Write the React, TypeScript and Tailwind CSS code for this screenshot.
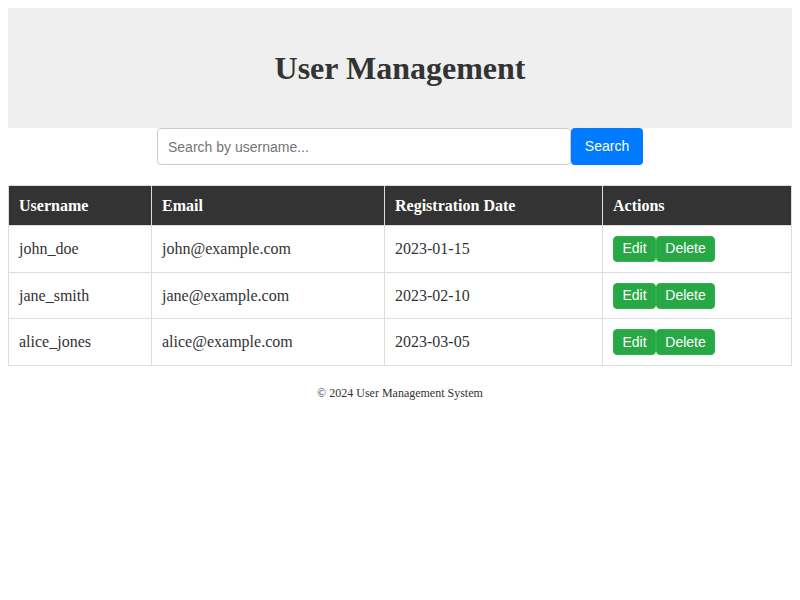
import React from "react";

const users = [
  { u: "john_doe", e: "john@example.com", d: "2023-01-15" },
  { u: "jane_smith", e: "jane@example.com", d: "2023-02-10" },
  { u: "alice_jones", e: "alice@example.com", d: "2023-03-05" },
];

export default function App() {
  return (
    <div className="p-2 bg-white min-h-[600px] text-[#333]" style={{ fontFamily: '"Liberation Serif", "Times New Roman", serif' }}>
      <header className="bg-[#efefef] h-[120px] flex items-center justify-center">
        <h1 className="text-[32px] font-bold text-[#333] leading-[37px]">User Management</h1>
      </header>
      <div className="flex justify-center">
        <input
          className="w-[414px] h-[37px] border border-[#ccc] rounded-[4px] px-[10px] text-[14px] text-[#333] placeholder:text-[#757575] outline-none"
          style={{ fontFamily: '"Liberation Sans", Arial, sans-serif' }}
          placeholder="Search by username..."
        />
        <button
          className="w-[72px] h-[37px] bg-[#007bff] text-white text-[14px] rounded-[4px]"
          style={{ fontFamily: '"Liberation Sans", Arial, sans-serif' }}
        >
          Search
        </button>
      </div>
      <table className="w-full mt-5 border-collapse text-[16px]">
        <thead>
          <tr className="bg-[#333] text-white h-[40px]">
            <th className="w-[143px] border border-[#ddd] px-[10px] text-left font-bold">Username</th>
            <th className="w-[233px] border border-[#ddd] px-[10px] text-left font-bold">Email</th>
            <th className="w-[218px] border border-[#ddd] px-[10px] text-left font-bold">Registration Date</th>
            <th className="border border-[#ddd] px-[10px] text-left font-bold">Actions</th>
          </tr>
        </thead>
        <tbody>
          {users.map((r) => (
            <tr key={r.u} className="h-[46.7px]">
              <td className="border border-[#ddd] px-[10px] text-[#333]">{r.u}</td>
              <td className="border border-[#ddd] px-[10px] text-[#333]">{r.e}</td>
              <td className="border border-[#ddd] px-[10px] text-[#333]">{r.d}</td>
              <td className="border border-[#ddd] px-[10px]">
                <div className="flex" style={{ fontFamily: '"Liberation Sans", Arial, sans-serif' }}>
                  <button className="h-[26px] w-[43px] bg-[#28a745] text-white text-[14px] rounded-[4px] border border-[#2fb24e]">Edit</button>
                  <button className="h-[26px] w-[59px] bg-[#28a745] text-white text-[14px] rounded-[4px] border border-[#2fb24e]">Delete</button>
                </div>
              </td>
            </tr>
          ))}
        </tbody>
      </table>
      <footer className="mt-[18px] text-center text-[12px] text-[#333]">© 2024 User Management System</footer>
    </div>
  );
}
